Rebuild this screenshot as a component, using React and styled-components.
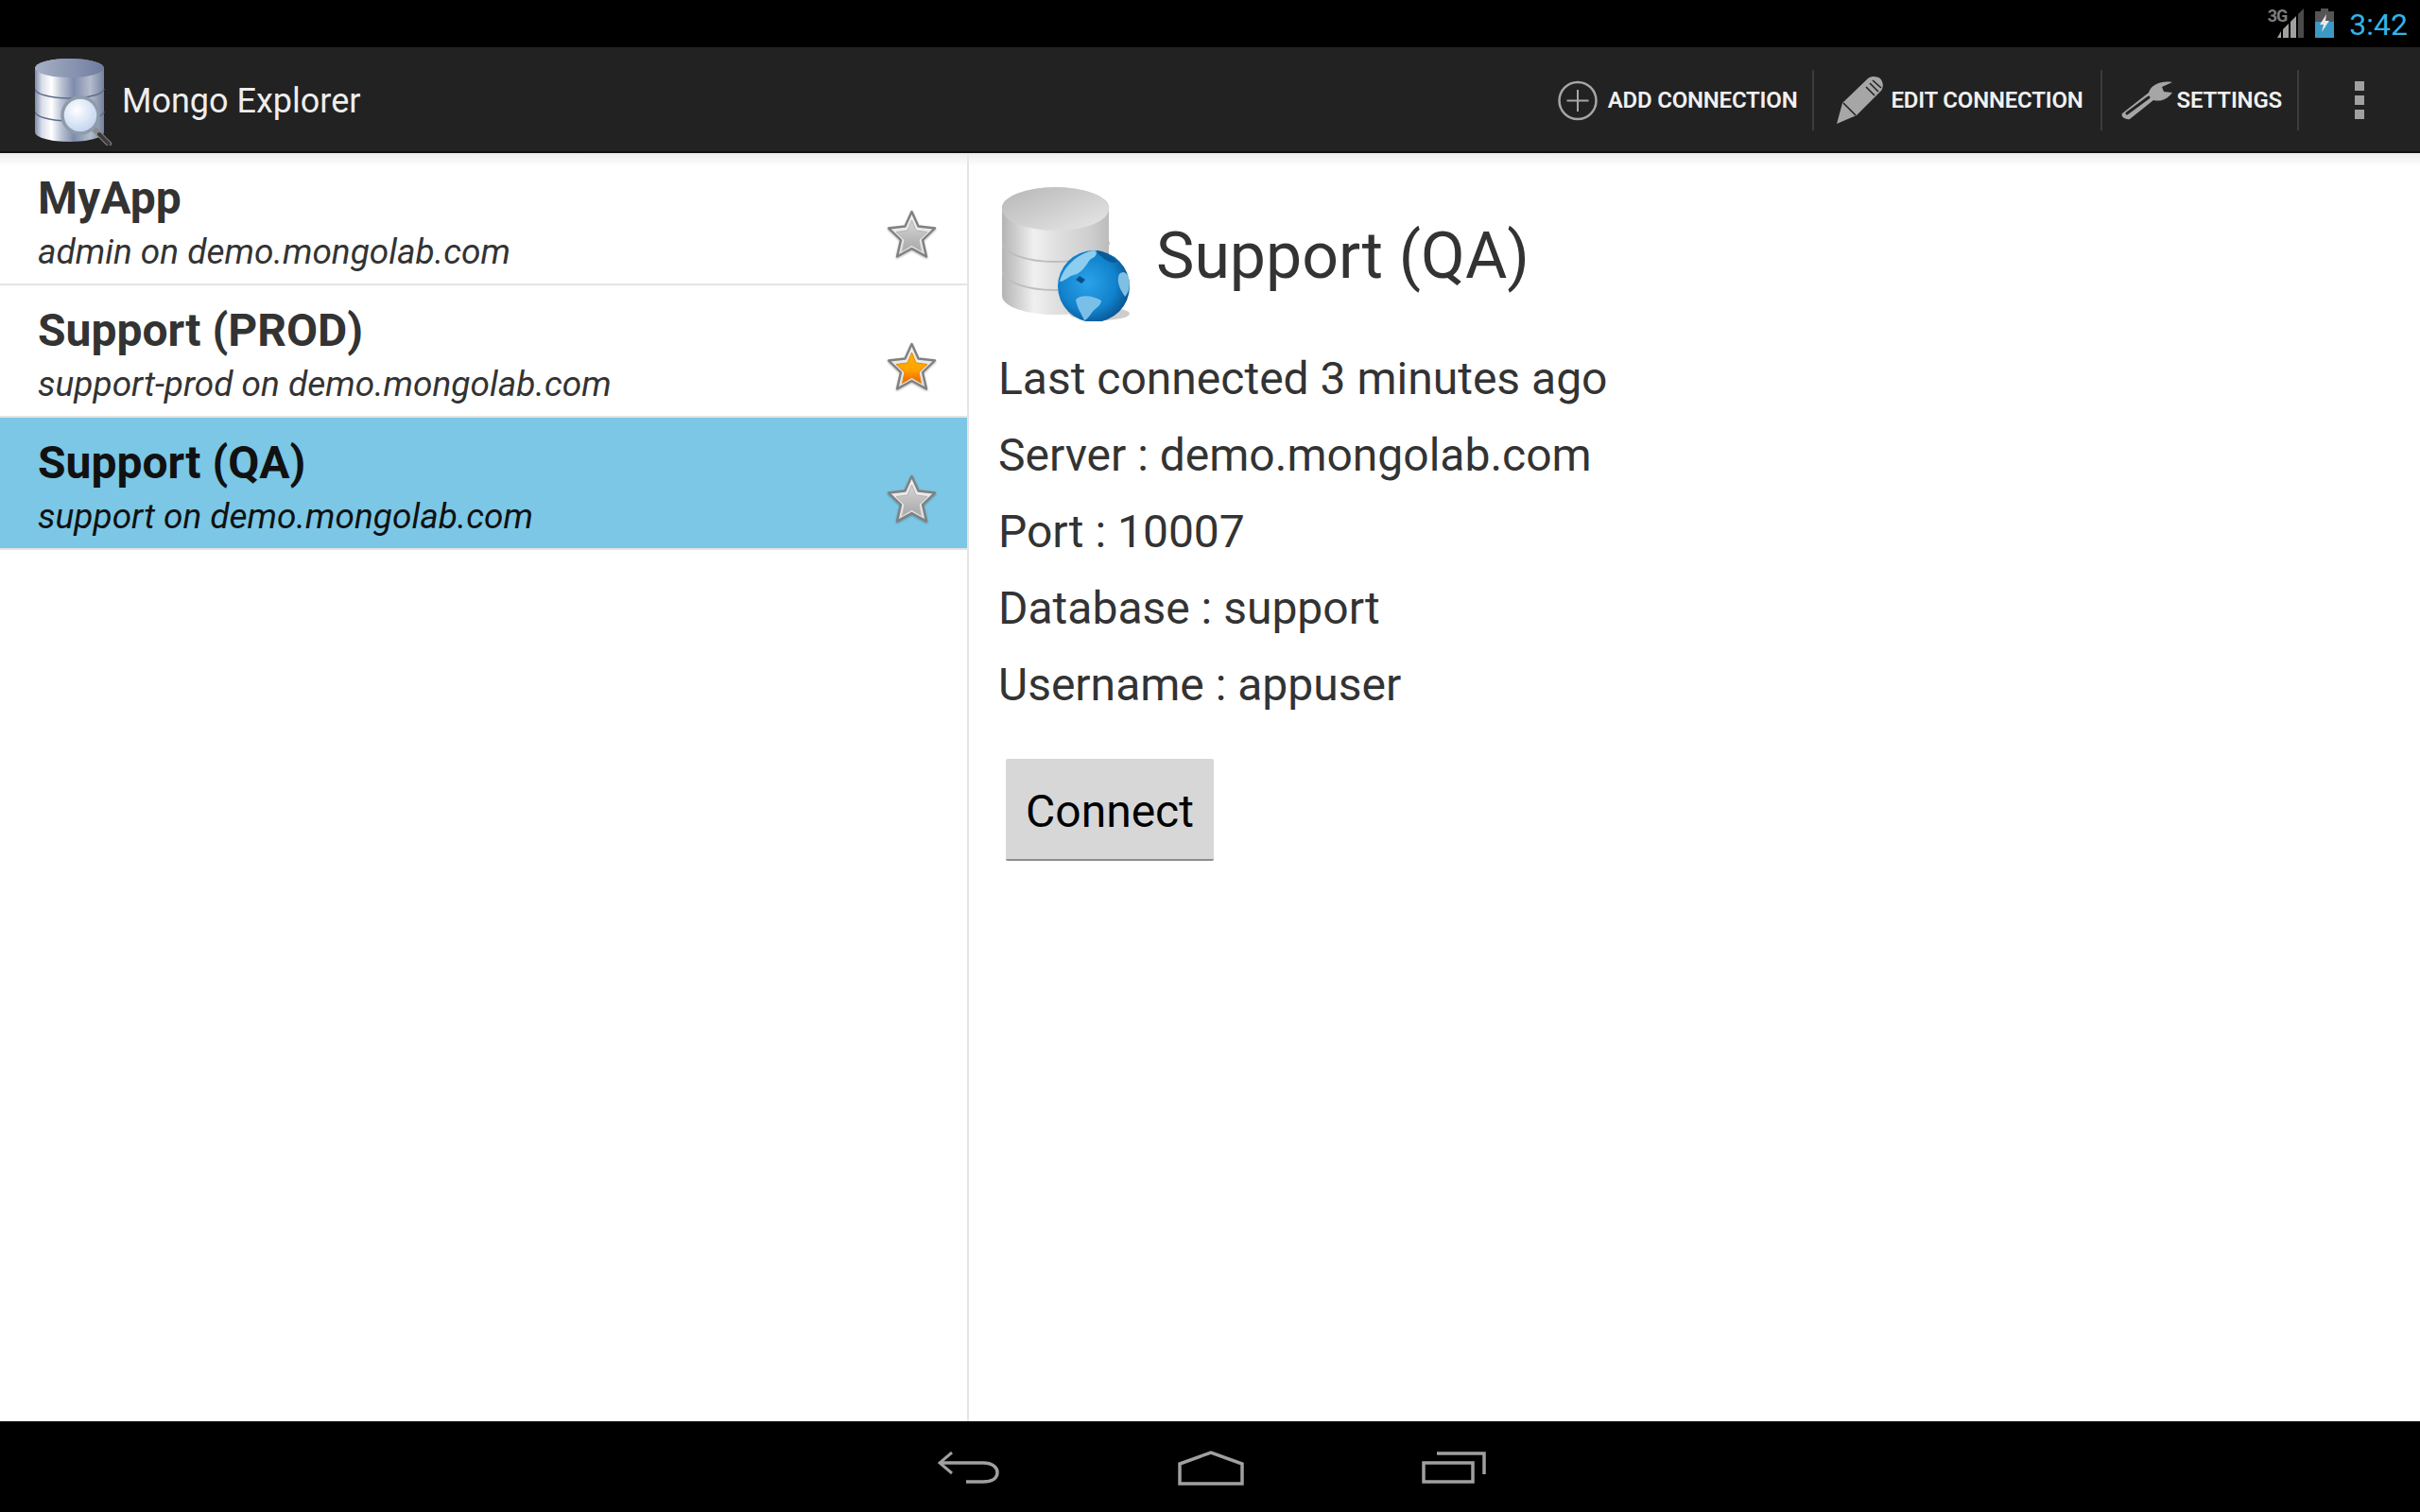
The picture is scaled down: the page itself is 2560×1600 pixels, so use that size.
import React from 'react';
import styled, { createGlobalStyle } from 'styled-components';

const connections = [
  { name: 'MyApp', sub: 'admin on demo.mongolab.com', fav: false },
  { name: 'Support (PROD)', sub: 'support-prod on demo.mongolab.com', fav: true },
  { name: 'Support (QA)', sub: 'support on demo.mongolab.com', fav: false, active: true },
];

const details = [
  'Last connected 3 minutes ago',
  'Server : demo.mongolab.com',
  'Port : 10007',
  'Database : support',
  'Username : appuser',
];

const STAR = '26.5,2 33.5,17.5 51,19.5 38,32 42,49.5 26.5,41 11,49.5 15,32 2,19.5 19.5,17.5';
const STAR_IN = '26.5,11 31,22 43,23.5 34,32 36.5,43.5 26.5,37.5 16.5,43.5 19,32 10,23.5 22,22';

const StarIcon = ({ fav }) => (
  <StarSvg viewBox="0 0 53 52">
    <defs>
      <linearGradient id="starOuter" x1="0" y1="0" x2="0" y2="1">
        <stop offset="0" stopColor="#f2f2f2" />
        <stop offset="1" stopColor="#dcdcdc" />
      </linearGradient>
      <linearGradient id="starGrey" x1="0" y1="0" x2="0" y2="1">
        <stop offset="0" stopColor="#d6d6d6" />
        <stop offset="1" stopColor="#a8a8a8" />
      </linearGradient>
      <linearGradient id="starGold" x1="0" y1="0" x2="0" y2="1">
        <stop offset="0" stopColor="#ffb400" />
        <stop offset="0.6" stopColor="#ffa000" />
        <stop offset="1" stopColor="#f25a00" />
      </linearGradient>
    </defs>
    <polygon points={STAR} fill="url(#starOuter)" stroke="#808080" strokeWidth="2.4" strokeLinejoin="round" />
    <polygon points={STAR_IN} fill={fav ? 'url(#starGold)' : 'url(#starGrey)'} stroke={fav ? '#e08a10' : '#b4b4b4'} strokeWidth="1" strokeLinejoin="round" />
  </StarSvg>
);

const LogoIcon = () => (
  <svg width="84" height="92" viewBox="0 0 84 92">
    <defs>
      <linearGradient id="steel" x1="0" y1="0" x2="1" y2="0">
        <stop offset="0" stopColor="#7f8cab" />
        <stop offset="0.1" stopColor="#d8dde8" />
        <stop offset="0.24" stopColor="#ffffff" />
        <stop offset="0.38" stopColor="#bcc4d4" />
        <stop offset="0.56" stopColor="#7e8bad" />
        <stop offset="0.8" stopColor="#b4bccd" />
        <stop offset="1" stopColor="#76839f" />
      </linearGradient>
      <linearGradient id="steelTop" x1="0" y1="0" x2="1" y2="0">
        <stop offset="0" stopColor="#a6b0c6" />
        <stop offset="1" stopColor="#6f7c9e" />
      </linearGradient>
      <radialGradient id="lens" cx="0.4" cy="0.35" r="0.7">
        <stop offset="0" stopColor="#ffffff" />
        <stop offset="1" stopColor="#bcd0ee" />
      </radialGradient>
    </defs>
    <path d="M0 10A36.5 10 0 0 1 73 10V78A36.5 10 0 0 1 0 78Z" fill="url(#steel)" />
    <ellipse cx="36.5" cy="10" rx="36.5" ry="10" fill="url(#steelTop)" />
    <path d="M0 32A36.5 10 0 0 0 73 32M0 56A36.5 10 0 0 0 73 56" fill="none" stroke="#5f6c8c" strokeWidth="1.5" />
    <line x1="62" y1="74" x2="78" y2="90" stroke="#8c8c8c" strokeWidth="6" strokeLinecap="round" />
    <line x1="68" y1="80" x2="78" y2="90" stroke="#3c3c3c" strokeWidth="4" strokeLinecap="round" />
    <circle cx="48" cy="60" r="19" fill="url(#lens)" stroke="#8e9caa" strokeWidth="3.5" />
  </svg>
);

const ServerIcon = () => (
  <svg width="140" height="142" viewBox="0 0 140 142">
    <defs>
      <linearGradient id="silver" x1="0" y1="0" x2="1" y2="0">
        <stop offset="0" stopColor="#b4b4b4" />
        <stop offset="0.14" stopColor="#cfcfcf" />
        <stop offset="0.3" stopColor="#f0f0f0" />
        <stop offset="0.5" stopColor="#e0e0e0" />
        <stop offset="0.8" stopColor="#d0d0d0" />
        <stop offset="1" stopColor="#bcbcbc" />
      </linearGradient>
      <linearGradient id="silverTop" x1="0" y1="0" x2="1" y2="1">
        <stop offset="0" stopColor="#b6b6b6" />
        <stop offset="1" stopColor="#e8e8e8" />
      </linearGradient>
      <radialGradient id="globe" cx="0.42" cy="0.45" r="0.65">
        <stop offset="0" stopColor="#2ba3ea" />
        <stop offset="0.6" stopColor="#1182cc" />
        <stop offset="1" stopColor="#064a84" />
      </radialGradient>
    </defs>
    <path d="M0 22A56.5 22 0 0 1 113 22V115A56.5 20 0 0 1 0 115Z" fill="url(#silver)" />
    <ellipse cx="56.5" cy="23" rx="56.5" ry="23" fill="url(#silverTop)" />
    <path d="M0 58A56.5 21 0 0 0 113 58M0 88A56.5 21 0 0 0 113 88" fill="none" stroke="#bdbdbd" strokeWidth="2" />
    <ellipse cx="103" cy="134" rx="32" ry="7" fill="#b8b8b8" opacity="0.7" />
    <circle cx="97" cy="105" r="38" fill="url(#globe)" />
    <path d="M61 100C65 84 80 70 97 67C102 68 100 74 94 76C90 80 88 86 82 90C78 94 74 92 70 96C66 98 64 100 61 100Z" fill="#8ccdf0" />
    <path d="M78 119C84 113 96 115 105 120C105 126 98 128 95 133C92 137 89 141 87 141C84 134 79 127 78 119Z" fill="#79bfe8" />
    <path d="M124 92C128 88 132 90 134 96C136 104 134 112 130 116C126 110 120 100 124 92Z" fill="#7fbfe2" />
    <path d="M100 67C108 68 116 72 122 79C116 81 110 78 106 74C103 72 101 70 100 67Z" fill="#0a5b98" />
    <path d="M78 98L84 102L88 98L82 94Z" fill="#064f8a" />
  </svg>
);

const AddIcon = () => (
  <svg width="42" height="43" viewBox="0 0 42 43" fill="none" stroke="#a6a6a6">
    <circle cx="21" cy="21.5" r="19.5" strokeWidth="2.5" />
    <path d="M21 10V33M9.5 21.5H32.5" strokeWidth="2" />
  </svg>
);

const PencilIcon = () => (
  <svg width="50" height="50" viewBox="0 0 50 50" fill="#a6a6a6">
    <path d="M0 50L6 28L33 2C37 -1 43 0 46 2C49 6 50 10 47 15L21 41Z" />
    <path d="M31 11L40 20M35 7L44 16M38 4L47 12M7 28L20 41" stroke="#222" strokeWidth="1.6" fill="none" />
  </svg>
);

const WrenchIcon = () => (
  <svg width="56" height="42" viewBox="0 0 56 42">
    <path d="M2 35L30 13C32 6 40 0 55 2L44 7L46 12L55 13C50 20 42 23 35 21L10 41C6 42 0 39 2 35Z" fill="#a6a6a6" />
    <path d="M7 35L30 18" stroke="#222" strokeWidth="3" strokeLinecap="round" />
  </svg>
);

const SignalIcon = () => (
  <svg width="28" height="31" viewBox="0 0 28 31">
    <polygon points="28,0 28,31 22,31 22,6" fill="#4a4a4a" />
    <polygon points="20,8 20,31 14,31 14,14" fill="#a0a0a0" />
    <polygon points="12,16 12,31 6,31 6,22" fill="#a0a0a0" />
    <polygon points="4,24 4,31 0,31" fill="#a0a0a0" />
  </svg>
);

const BatteryIcon = () => (
  <svg width="20" height="31" viewBox="0 0 20 31">
    <path d="M6 0H14V3H20V14H0V3H6Z" fill="#555" />
    <rect x="0" y="14" width="20" height="17" fill="#3a9ac4" />
    <polygon points="12,6 5,17 9,17 7,25 15,13 11,13" fill="#e8e8e8" />
  </svg>
);

const BackIcon = () => (
  <svg width="66" height="34" viewBox="0 0 66 34" fill="none" stroke="#a0a0a0" strokeWidth="3.5">
    <path d="M15 1L2 12L15 23" strokeWidth="3" />
    <path d="M2 12H48C58 12 63 17 63 22C63 28 58 32 48 32H30" />
  </svg>
);

const HomeIcon = () => (
  <svg width="70" height="37" viewBox="0 0 70 37" fill="none" stroke="#a0a0a0" strokeWidth="3.5">
    <path d="M2 35V14L35 2L68 14V35Z" />
  </svg>
);

const RecentsIcon = () => (
  <svg width="68" height="34" viewBox="0 0 68 34" fill="none" stroke="#a0a0a0" strokeWidth="3.5">
    <path d="M2 12H54V32H2Z" />
    <path d="M16 2H66V24" />
  </svg>
);

export default function App() {
  return (
    <Screen>
      <GlobalStyle />
      <StatusBar>
        <NetworkTag>3G</NetworkTag>
        <SignalIcon />
        <BatteryIcon />
        <Clock>3:42</Clock>
      </StatusBar>
      <ActionBar>
        <Brand>
          <LogoIcon />
          <AppTitle>Mongo Explorer</AppTitle>
        </Brand>
        <Actions>
          <Action $pad="0 16px 0 0" $gap="11px">
            <AddIcon />
            ADD CONNECTION
          </Action>
          <Action $pad="0 18px 0 24px" $gap="7px">
            <PencilIcon />
            EDIT CONNECTION
          </Action>
          <Action $pad="0 16px 0 19px" $gap="4px">
            <WrenchIcon />
            SETTINGS
          </Action>
          <Overflow>
            <i />
            <i />
            <i />
          </Overflow>
        </Actions>
      </ActionBar>
      <Main>
        <List>
          {connections.map((c) => (
            <Row key={c.name} $active={c.active}>
              <RowText>
                <RowName $active={c.active}>{c.name}</RowName>
                <RowSub $active={c.active}>{c.sub}</RowSub>
              </RowText>
              <StarIcon fav={c.fav} />
            </Row>
          ))}
        </List>
        <Detail>
          <DetailHead>
            <ServerIcon />
            <DetailTitle>Support (QA)</DetailTitle>
          </DetailHead>
          {details.map((d) => (
            <DetailLine key={d}>{d}</DetailLine>
          ))}
          <ConnectButton>Connect</ConnectButton>
        </Detail>
      </Main>
      <NavBar>
        <BackIcon />
        <HomeIcon />
        <RecentsIcon />
      </NavBar>
    </Screen>
  );
}

const GlobalStyle = createGlobalStyle`
  html, body {
    margin: 0;
    padding: 0;
    background: #000;
  }
  * {
    box-sizing: border-box;
  }
`;

const Screen = styled.div`
  width: 2560px;
  height: 1600px;
  display: flex;
  flex-direction: column;
  font-family: Roboto, "Liberation Sans", sans-serif;
  background: #fff;
  overflow: hidden;
`;

const StatusBar = styled.div`
  height: 50px;
  flex: none;
  background: #000;
  display: flex;
  align-items: flex-start;
  justify-content: flex-end;
  padding: 9px 13px 0 0;

  svg {
    flex: none;
  }

  svg + svg {
    margin-left: 12px;
  }
`;

const NetworkTag = styled.span`
  font-size: 18px;
  line-height: 16px;
  font-weight: 700;
  letter-spacing: -1px;
  color: #7c7c7c;
  margin-right: -10px;
`;

const Clock = styled.span`
  font-size: 32px;
  line-height: 32px;
  font-weight: 400;
  color: #33b5e5;
  margin-left: 16px;
  margin-top: 1px;
`;

const ActionBar = styled.div`
  height: 112px;
  flex: none;
  position: relative;
  z-index: 1;
  background: #222;
  border-bottom: 2px solid #111;
  display: flex;
  align-items: center;
  justify-content: space-between;
  padding-left: 37px;

  &::after {
    content: '';
    position: absolute;
    left: 0;
    right: 0;
    top: 112px;
    height: 14px;
    background: linear-gradient(#ececec, rgba(255, 255, 255, 0));
  }
`;

const Brand = styled.div`
  display: flex;
  align-items: center;
  margin-top: 6px;
`;

const AppTitle = styled.span`
  font-size: 36px;
  color: #eee;
  margin-left: 8px;
  margin-top: -2px;
`;

const Actions = styled.div`
  display: flex;
  align-items: center;
  padding: 2px 59px 0 0;
`;

const Action = styled.div`
  height: 64px;
  display: flex;
  align-items: center;
  gap: ${(p) => p.$gap};
  padding: ${(p) => p.$pad};
  border-right: 2px solid #3c3c3c;
  font-size: 24px;
  font-weight: 600;
  letter-spacing: -0.2px;
  color: #f0f0f0;
  white-space: nowrap;
`;

const Overflow = styled.div`
  display: flex;
  flex-direction: column;
  gap: 5px;
  margin-left: 59px;

  i {
    display: block;
    width: 10px;
    height: 10px;
    background: #a0a0a0;
  }
`;

const Main = styled.div`
  flex: 1;
  display: flex;
  min-height: 0;
`;

const List = styled.div`
  width: 1025px;
  flex: none;
  border-right: 2px solid #e4e4e4;
`;

const Row = styled.div`
  height: 140px;
  display: flex;
  align-items: flex-start;
  justify-content: space-between;
  padding: 0 32px 0 40px;
  background: ${(p) => (p.$active ? '#7bc7e5' : 'transparent')};
  border-bottom: 2px solid #e4e4e4;
`;

const StarSvg = styled.svg`
  width: 53px;
  height: 52px;
  margin-top: 60px;
  flex: none;
  filter: drop-shadow(0 1px 1px rgba(0, 0, 0, 0.3));
`;

const RowText = styled.div`
  display: flex;
  flex-direction: column;
  padding-top: 19px;
`;

const RowName = styled.span`
  font-size: 48px;
  line-height: 58px;
  font-weight: 700;
  color: ${(p) => (p.$active ? '#111' : '#333')};
`;

const RowSub = styled.span`
  font-size: 37px;
  line-height: 56px;
  font-style: italic;
  color: ${(p) => (p.$active ? '#111' : '#333')};
`;

const Detail = styled.div`
  flex: 1;
  display: flex;
  flex-direction: column;
  align-items: flex-start;
  padding: 36px 0 0 31px;
  color: #333;
`;

const DetailHead = styled.div`
  display: flex;
  align-items: center;
  gap: 23px;
  margin: 0 0 20px 4px;
`;

const DetailTitle = styled.h1`
  margin: 4px 0 0;
  font-size: 68px;
  font-weight: 400;
`;

const DetailLine = styled.div`
  font-size: 48px;
  line-height: 81px;
`;

const ConnectButton = styled.button`
  width: 220px;
  height: 108px;
  margin: 38px 0 0 8px;
  padding: 4px 0 0;
  border: none;
  border-bottom: 2px solid #8e8e8e;
  border-radius: 2px;
  background: #d7d7d7;
  color: #000;
  font-family: inherit;
  font-size: 48px;
`;

const NavBar = styled.div`
  height: 96px;
  flex: none;
  background: #000;
  display: flex;
  align-items: center;
  padding: 2px 0 0 992px;
  gap: 188px;
`;
